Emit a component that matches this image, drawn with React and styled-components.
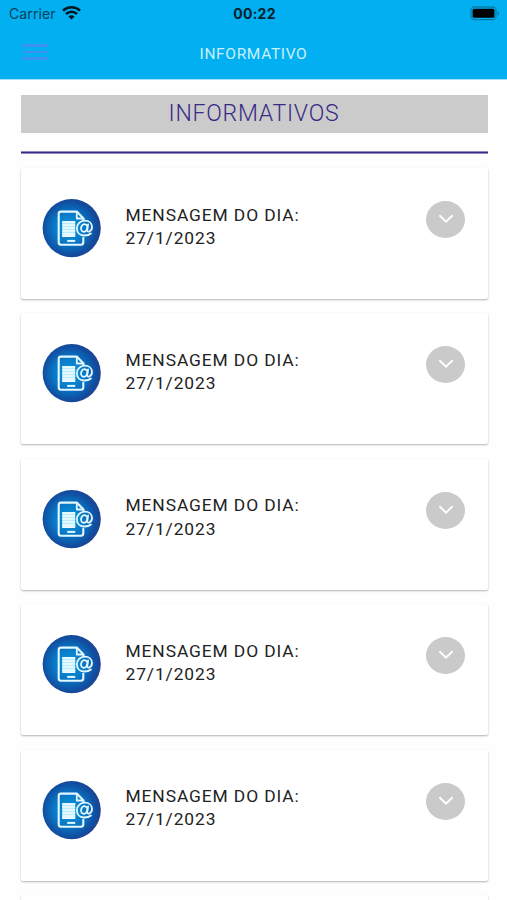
import React from 'react'
import styled, { createGlobalStyle } from 'styled-components';

const GlobalStyle = createGlobalStyle`
    * {
        box-sizing: border-box;
    }

    body {
        margin: 0;
        background: #ffffff;
        font-family: Roboto, "Liberation Sans", sans-serif;
    }
`

const Screen = styled.div`
    width: 507px;
    height: 900px;
    overflow: hidden;
    background: #fefefe;
`

const Header = styled.header`
    height: 79px;
    background: #02aff0;
    box-shadow: 0 1px 0 #a5e1f9;
`

const StatusBar = styled.div`
    display: grid;
    grid-template-columns: 1fr auto 1fr;
    align-items: center;
    height: 27px;
    padding: 0 7px 0 9px;
    font-family: Inter, "Liberation Sans", sans-serif;
    color: #06222e;
`

const Carrier = styled.div`
    display: flex;
    align-items: center;
    gap: 6px;
    font-size: 14px;
    letter-spacing: 0.1px;
    color: #064158;

    svg {
        display: block;
        margin-top: -2px;
    }
`

const Clock = styled.div`
    font-size: 14px;
    font-weight: 700;
    letter-spacing: 0.25px;
`

const Battery = styled.svg`
    display: block;
    justify-self: end;
`

const NavBar = styled.nav`
    display: grid;
    grid-template-columns: 1fr auto 1fr;
    align-items: center;
    height: 53px;
    padding: 0 22px;
`

const MenuButton = styled.button`
    display: flex;
    flex-direction: column;
    gap: 4px;
    width: 26px;
    margin-top: -3px;
    padding: 0;
    border: 0;
    background: none;

    span {
        width: 26px;
        height: 2.6px;
        background: #3d92f2;
    }
`

const NavTitle = styled.h1`
    margin: 0;
    font-size: 15.5px;
    font-weight: 400;
    line-height: 20px;
    letter-spacing: 0.65px;
    color: #c9effc;
`

const Content = styled.main`
    padding: 16px 19.5px 0 20.5px;
`

const SectionTitle = styled.h2`
    height: 38px;
    margin: 0;
    background: #cbcbcb;
    font-size: 23px;
    font-weight: 300;
    line-height: 37px;
    letter-spacing: 0.75px;
    text-align: center;
    color: #392a88;
`

const Divider = styled.hr`
    height: 3px;
    margin: 18px 0 14px;
    border: 0;
    border-top: 1px solid #9188c4;
    border-bottom: 1px solid #9188c4;
    background: #392787;
`

const CardList = styled.ul`
    display: flex;
    flex-direction: column;
    gap: 14.4px;
    margin: 0;
    padding: 0;
    list-style: none;
`

const Card = styled.li`
    display: flex;
    align-items: flex-start;
    flex: none;
    height: 131px;
    padding: 31px 22.2px 0 21.6px;
    border-radius: 2px;
    background: #ffffff;
    box-shadow: 0 1px 2px rgba(0, 0, 0, 0.3);
`

const Message = styled.div`
    flex: 1;
    margin: 4.5px 0 0 24.4px;
    font-size: 17.4px;
    line-height: 23.3px;
    letter-spacing: 0.9px;
    color: #222222;

    p {
        margin: 0;
    }
`

const ExpandButton = styled.button`
    display: flex;
    align-items: center;
    justify-content: center;
    width: 39px;
    height: 37px;
    margin-top: 2px;
    padding: 0 0 1px;
    border: 0;
    border-radius: 50%;
    background: #cacaca;
`

const messages = [
    { id: 1, date: '27/1/2023' },
    { id: 2, date: '27/1/2023' },
    { id: 3, date: '27/1/2023' },
    { id: 4, date: '27/1/2023' },
    { id: 5, date: '27/1/2023' },
]

const WifiIcon = () => (
    <svg width="19" height="14" viewBox="0 0 19 14" fill="none" stroke="#04161e" strokeWidth="2.5">
        <path d="M1 4.6C5.8 .2 13.2 .2 18 4.6" />
        <path d="M4 8C7.1 5.1 11.9 5.1 15 8" />
        <path d="M9.5 13.4L6.4 10.4C8.1 8.9 10.9 8.9 12.6 10.4Z" fill="#04161e" stroke="none" />
    </svg>
)

const BatteryIcon = () => (
    <Battery width="30" height="15" viewBox="0 0 30 15">
        <rect x="1" y="1" width="25" height="12.6" rx="3.5" fill="none" stroke="#067ba8" strokeWidth="1.3" />
        <rect x="2.6" y="2.8" width="21.8" height="9" rx="1.5" fill="#000000" />
        <path d="M27.6 5v4.6c1.9-.7 1.9-3.9 0-4.6Z" fill="#067ba8" />
    </Battery>
)

const MessageIcon = () => (
    <svg width="59" height="59" viewBox="0 0 59 59" fill="none">
        <defs>
            <radialGradient id="disc" cx="0.46" cy="0.5" r="0.54">
                <stop offset="0" stopColor="#0d9be0" />
                <stop offset="0.5" stopColor="#0878c6" />
                <stop offset="0.85" stopColor="#114da0" />
                <stop offset="1" stopColor="#1f4290" />
            </radialGradient>
        </defs>
        <circle cx="29.7" cy="29.1" r="29.1" fill="url(#disc)" />
        {/* page with a folded corner */}
        <path
            d="M41.5 21V19.6L34.8 12.6H19Q16.7 12.6 16.7 14.9V43.3Q16.7 45.8 19 45.8H38.8Q41.3 45.8 41.3 43.3V38.8"
            stroke="#e3f8ff"
            strokeWidth="2.1"
            strokeLinecap="round"
            strokeLinejoin="round"
        />
        <path d="M34.8 12.8V19.5H41.2" stroke="#e3f8ff" strokeWidth="1.8" strokeLinejoin="round" />
        <rect x="20.2" y="22" width="13" height="15.4" fill="#b9ecff" />
        <path d="M20.2 23h13M20.2 26h13M20.2 29h13M20.2 32h13M20.2 35h13M20.2 37.2h13" stroke="#f2fcff" strokeWidth="1.7" />
        <path d="M25.2 41.9h8" stroke="#e3f8ff" strokeWidth="2" />
        {/* at sign */}
        <ellipse cx="42.2" cy="29" rx="3.1" ry="3.8" transform="rotate(16 42.2 29)" stroke="#e3f8ff" strokeWidth="1.8" />
        <path
            d="M46.1 25.3L45.2 31C45.1 34.2 50 32.4 50 28C50 24 46.9 21.7 42.7 21.7C38.2 21.7 34.9 25.1 34.9 29.4C34.9 33.7 38 36.5 42.7 36.5C45.2 36.5 47.3 35.8 48.9 34.5"
            stroke="#e3f8ff"
            strokeWidth="1.8"
            strokeLinecap="round"
        />
    </svg>
)

const ChevronIcon = () => (
    <svg width="16" height="10" viewBox="0 0 16 10" fill="none">
        <path d="M1.4 1.2L8 7.6L14.6 1.2" stroke="#ffffff" strokeWidth="1.9" />
    </svg>
)

const MessageCard = ({date}) => {
    return (
        <Card>
            <MessageIcon />
            <Message>
                <p>MENSAGEM DO DIA:</p>
                <p>{date}</p>
            </Message>
            <ExpandButton>
                <ChevronIcon />
            </ExpandButton>
        </Card>
    )
}

const App = () => {
    return (
        <Screen>
            <GlobalStyle />
            <Header>
                <StatusBar>
                    <Carrier>
                        Carrier
                        <WifiIcon />
                    </Carrier>
                    <Clock>00:22</Clock>
                    <BatteryIcon />
                </StatusBar>
                <NavBar>
                    <MenuButton>
                        <span />
                        <span />
                        <span />
                    </MenuButton>
                    <NavTitle>INFORMATIVO</NavTitle>
                </NavBar>
            </Header>
            <Content>
                <SectionTitle>INFORMATIVOS</SectionTitle>
                <Divider />
                <CardList>
                    {messages.map((item) => (
                        <MessageCard key={item.id} date={item.date} />
                    ))}
                    {/* top edge of the next card */}
                    <Card />
                </CardList>
            </Content>
        </Screen>
    )
}

export default App
